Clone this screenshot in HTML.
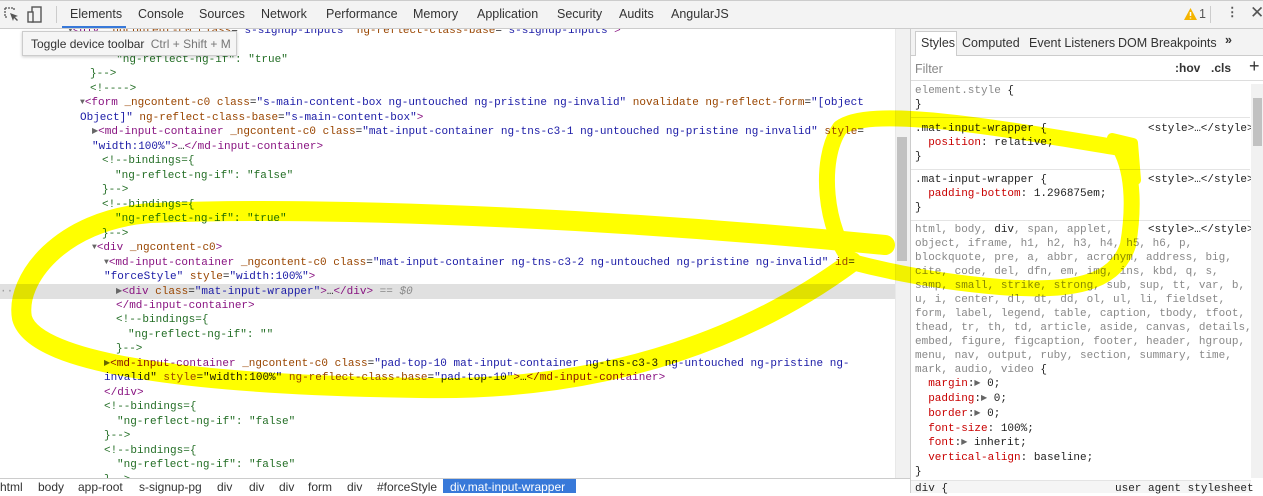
<!DOCTYPE html>
<html><head><meta charset="utf-8"><style>
*{margin:0;padding:0;box-sizing:border-box}
body{width:1263px;height:493px;overflow:hidden;background:#fff;position:relative;font-family:"Liberation Sans",sans-serif}
.top{position:absolute;left:0;top:0;width:1263px;height:29px;background:#f3f3f3;border-bottom:1px solid #ccc;border-top:1px solid #ccc}
.tab{position:absolute;top:7px;font-size:12.5px;color:#333}
.code{position:absolute;font-family:"Liberation Mono",monospace;font-size:11px;line-height:14px;white-space:pre;color:#222}
.t{color:#881280}.a{color:#994500}.v{color:#1a1aa6}.c{color:#236e25}.b{color:#a894a6}.g{color:#888}
.tri{font-size:8px;color:#666;position:relative;top:-1px}
.p{color:#c80000}
.rt{position:absolute;font-family:"Liberation Mono",monospace;font-size:11px;line-height:14px;white-space:pre;color:#222}
.hr{position:absolute;left:911px;width:339px;height:1px;background:#e4e4e4}
.bc{position:absolute;top:480px;font-size:12px;color:#333}
</style></head><body>

<!-- left code -->
<div class="code" style="left:68px;top:24px"><span class="tri">▼</span><span class="t">&lt;div</span> <span class="a">_ngcontent-c0</span> <span class="a">class</span>=<span class="v">"s-signup-inputs"</span> <span class="a">ng-reflect-class-base</span>=<span class="v">"s-signup-inputs"</span><span class="t">&gt;</span></div>
<div class="code c" style="left:90px;top:38px">&lt;!--bindings={</div>
<div class="code c" style="left:103px;top:53px">  "ng-reflect-ng-if": "true"</div>
<div class="code c" style="left:90px;top:67px">}--&gt;</div>
<div class="code c" style="left:90px;top:82px">&lt;!----&gt;</div>
<div class="code" style="left:80px;top:96px"><span class="tri">▼</span><span class="t">&lt;form</span> <span class="a">_ngcontent-c0</span> <span class="a">class</span>=<span class="v">"s-main-content-box ng-untouched ng-pristine ng-invalid"</span> <span class="a">novalidate</span> <span class="a">ng-reflect-form</span>=<span class="v">"[object</span></div>
<div class="code" style="left:80px;top:111px"><span class="v">Object]"</span> <span class="a">ng-reflect-class-base</span>=<span class="v">"s-main-content-box"</span><span class="t">&gt;</span></div>
<div class="code" style="left:92px;top:125px"><span class="tri">▶</span><span class="t">&lt;md-input-container</span> <span class="a">_ngcontent-c0</span> <span class="a">class</span>=<span class="v">"mat-input-container ng-tns-c3-1 ng-untouched ng-pristine ng-invalid"</span> <span class="a">style</span>=</div>
<div class="code" style="left:92px;top:140px"><span class="v">"width:100%"</span><span class="t">&gt;</span>…<span class="t">&lt;/md-input-container&gt;</span></div>
<div class="code c" style="left:102px;top:154px">&lt;!--bindings={</div>
<div class="code c" style="left:115px;top:169px">"ng-reflect-ng-if": "false"</div>
<div class="code c" style="left:102px;top:183px">}--&gt;</div>
<div class="code c" style="left:102px;top:198px">&lt;!--bindings={</div>
<div class="code c" style="left:115px;top:212px">"ng-reflect-ng-if": "true"</div>
<div class="code c" style="left:102px;top:227px">}--&gt;</div>
<div class="code" style="left:92px;top:241px"><span class="tri">▼</span><span class="t">&lt;div</span> <span class="a">_ngcontent-c0</span><span class="t">&gt;</span></div>
<div class="code" style="left:104px;top:256px"><span class="tri">▼</span><span class="t">&lt;md-input-container</span> <span class="a">_ngcontent-c0</span> <span class="a">class</span>=<span class="v">"mat-input-container ng-tns-c3-2 ng-untouched ng-pristine ng-invalid"</span> <span class="a">id</span>=</div>
<div class="code" style="left:104px;top:270px"><span class="v">"forceStyle"</span> <span class="a">style</span>=<span class="v">"width:100%"</span><span class="t">&gt;</span></div>
<div style="position:absolute;left:0;top:284px;width:895px;height:15px;background:#e0e0e0"></div>
<div class="code" style="left:0;top:285px;color:#999">··</div>
<div class="code" style="left:116px;top:285px"><span class="tri">▶</span><span class="t">&lt;div</span> <span class="a">class</span>=<span class="v">"mat-input-wrapper"</span><span class="t">&gt;</span>…<span class="t">&lt;/div&gt;</span> <span class="g">== <i>$0</i></span></div>
<div class="code t" style="left:116px;top:299px">&lt;/md-input-container&gt;</div>
<div class="code c" style="left:116px;top:313px">&lt;!--bindings={</div>
<div class="code c" style="left:128px;top:328px">"ng-reflect-ng-if": ""</div>
<div class="code c" style="left:116px;top:342px">}--&gt;</div>
<div class="code" style="left:104px;top:357px"><span class="tri">▶</span><span class="t">&lt;md-input-container</span> <span class="a">_ngcontent-c0</span> <span class="a">class</span>=<span class="v">"pad-top-10 mat-input-container ng-tns-c3-3 ng-untouched ng-pristine ng-</span></div>
<div class="code" style="left:104px;top:371px"><span class="v">invalid"</span> <span class="a">style</span>=<span class="v">"width:100%"</span> <span class="a">ng-reflect-class-base</span>=<span class="v">"pad-top-10"</span><span class="t">&gt;</span>…<span class="t">&lt;/md-input-container&gt;</span></div>
<div class="code t" style="left:104px;top:386px">&lt;/div&gt;</div>
<div class="code c" style="left:104px;top:400px">&lt;!--bindings={</div>
<div class="code c" style="left:117px;top:415px">"ng-reflect-ng-if": "false"</div>
<div class="code c" style="left:104px;top:429px">}--&gt;</div>
<div class="code c" style="left:104px;top:444px">&lt;!--bindings={</div>
<div class="code c" style="left:117px;top:458px">"ng-reflect-ng-if": "false"</div>
<div class="code c" style="left:104px;top:473px">}--&gt;</div>

<!-- left scrollbar -->
<div style="position:absolute;left:895px;top:29px;width:15px;height:449px;background:#f1f1f1;border-left:1px solid #e8e8e8"></div>
<div style="position:absolute;left:897px;top:137px;width:10px;height:124px;background:#c1c1c1"></div>

<!-- breadcrumb -->
<div style="position:absolute;left:0;top:478px;width:910px;height:15px;background:#fff;border-top:1px solid #ccc"></div>
<div class="bc" style="left:0">html</div><div class="bc" style="left:38px">body</div><div class="bc" style="left:78px">app-root</div><div class="bc" style="left:139px">s-signup-pg</div><div class="bc" style="left:217px">div</div><div class="bc" style="left:249px">div</div><div class="bc" style="left:279px">div</div><div class="bc" style="left:308px">form</div><div class="bc" style="left:347px">div</div><div class="bc" style="left:377px">#forceStyle</div>
<div style="position:absolute;left:443px;top:479px;width:133px;height:14px;background:#3879d9"></div>
<div class="bc" style="left:450px;color:#fff">div.mat-input-wrapper</div>

<!-- right panel -->
<div style="position:absolute;left:910px;top:29px;width:353px;height:464px;background:#fff;border-left:1px solid #ccc"></div>
<div style="position:absolute;left:911px;top:29px;width:352px;height:27px;background:#f3f3f3;border-bottom:1px solid #ccc"></div>
<div style="position:absolute;left:915px;top:31px;width:42px;height:25px;background:#fff;border:1px solid #ccc;border-bottom:none"></div>
<div class="tab" style="left:921px;top:36px">Styles</div>
<div class="tab" style="left:962px;top:36px">Computed</div>
<div class="tab" style="left:1029px;top:36px">Event Listeners</div>
<div class="tab" style="left:1118px;top:36px">DOM Breakpoints</div>
<div class="tab" style="left:1225px;top:33px;font-weight:bold">»</div>
<div style="position:absolute;left:911px;top:56px;width:352px;height:25px;border-bottom:1px solid #ddd"></div>
<div class="tab" style="left:915px;top:62px;color:#888">Filter</div>
<div class="tab" style="left:1175px;top:61px;font-weight:bold;font-size:12px">:hov</div>
<div class="tab" style="left:1211px;top:61px;font-weight:bold;font-size:12px">.cls</div>
<div class="tab" style="left:1249px;top:56px;font-size:18px">+</div>

<div class="rt" style="left:915px;top:84px"><span class="g">element.style</span> {
}</div>
<div class="hr" style="top:117px"></div>
<div class="rt" style="left:915px;top:122px">.mat-input-wrapper {
  <span class="p">position</span>: relative;
}</div>
<div class="rt g" style="left:1148px;top:122px">&lt;style&gt;…&lt;/style&gt;</div>
<div class="hr" style="top:169px"></div>
<div class="rt" style="left:915px;top:173px">.mat-input-wrapper {
  <span class="p">padding-bottom</span>: 1.296875em;
}</div>
<div class="rt g" style="left:1148px;top:173px">&lt;style&gt;…&lt;/style&gt;</div>
<div class="hr" style="top:220px"></div>
<div class="rt" style="left:915px;top:223px"><span class="g">html, body, </span>div<span class="g">, span, applet,
object, iframe, h1, h2, h3, h4, h5, h6, p,
blockquote, pre, a, abbr, acronym, address, big,
cite, code, del, dfn, em, img, ins, kbd, q, s,
samp, small, strike, strong, sub, sup, tt, var, b,
u, i, center, dl, dt, dd, ol, ul, li, fieldset,
form, label, legend, table, caption, tbody, tfoot,
thead, tr, th, td, article, aside, canvas, details,
embed, figure, figcaption, footer, header, hgroup,
menu, nav, output, ruby, section, summary, time,
mark, audio, video</span> {
  <span class="p">margin</span>:<span class="tri">▶</span> 0;
  <span class="p">padding</span>:<span class="tri">▶</span> 0;
  <span class="p">border</span>:<span class="tri">▶</span> 0;
  <span class="p">font-size</span>: 100%;
  <span class="p">font</span>:<span class="tri">▶</span> inherit;
  <span class="p">vertical-align</span>: baseline;
}</div>
<div class="rt g" style="left:1148px;top:223px">&lt;style&gt;…&lt;/style&gt;</div>
<div style="position:absolute;left:911px;top:480px;width:340px;height:13px;background:#f5f5f5;border-top:1px solid #e4e4e4"></div>
<div class="rt" style="left:915px;top:482px">div {</div>
<div class="rt g" style="left:1115px;top:482px">user agent stylesheet</div>
<div style="position:absolute;left:1251px;top:84px;width:12px;height:394px;background:#f1f1f1"></div>
<div style="position:absolute;left:1253px;top:98px;width:9px;height:48px;background:#c1c1c1"></div>

<!-- top toolbar -->
<div class="top"></div>
<svg style="position:absolute;left:4px;top:7px" width="16" height="16" viewBox="0 0 16 16"><path d="M1 1h9v3M1 1v9h3" fill="none" stroke="#555" stroke-width="1.3" stroke-dasharray="2 1"/><path d="M6 6l8 3-3 1 3 3-1 1-3-3-1 3z" fill="#555"/></svg>
<svg style="position:absolute;left:27px;top:6px" width="16" height="17" viewBox="0 0 16 17"><rect x="5" y="1" width="9" height="15" fill="none" stroke="#555" stroke-width="1.4"/><rect x="1" y="6" width="5" height="10" fill="#f3f3f3" stroke="#555" stroke-width="1.4"/></svg>
<div style="position:absolute;left:56px;top:6px;width:1px;height:17px;background:#ccc"></div>
<div class="tab" style="left:70px">Elements</div>
<div style="position:absolute;left:62px;top:26px;width:64px;height:2px;background:#3879d9"></div>
<div class="tab" style="left:138px">Console</div>
<div class="tab" style="left:199px">Sources</div>
<div class="tab" style="left:261px">Network</div>
<div class="tab" style="left:326px">Performance</div>
<div class="tab" style="left:413px">Memory</div>
<div class="tab" style="left:477px">Application</div>
<div class="tab" style="left:557px">Security</div>
<div class="tab" style="left:619px">Audits</div>
<div class="tab" style="left:671px">AngularJS</div>
<svg style="position:absolute;left:1184px;top:8px" width="13" height="12" viewBox="0 0 13 12"><path d="M6.5 0L13 12H0z" fill="#f4b400"/><path d="M6.5 4v4M6.5 9.5v1" stroke="#fff" stroke-width="1.5"/></svg>
<div class="tab" style="left:1199px;color:#555">1</div>
<div style="position:absolute;left:1210px;top:6px;width:1px;height:17px;background:#ccc"></div>
<div class="tab" style="left:1226px;top:4px;font-weight:bold;color:#555">⋮</div>
<div class="tab" style="left:1250px;top:3px;font-size:17px;color:#555">✕</div>

<!-- tooltip -->
<div style="position:absolute;left:22px;top:31px;width:215px;height:25px;background:#f5f5f5;border:1px solid #ccc;box-shadow:0 1px 3px rgba(0,0,0,.2);font-size:12px;color:#333;padding:5px 8px;white-space:nowrap">Toggle device toolbar <span style="color:#777;margin-left:3px">Ctrl + Shift + M</span></div>

<!-- yellow marker -->
<svg style="position:absolute;left:0;top:0;mix-blend-mode:multiply" width="1263" height="493" viewBox="0 0 1263 493">
<g fill="none" stroke="#ffff00" stroke-linecap="round" stroke-linejoin="round">
<path stroke-width="20" d="M885 245 C 650 222 350 205 150 213 C 60 220 15 280 22 318 C 35 365 200 385 420 388 C 620 392 760 330 852 262"/>
<path stroke-width="16" d="M852 262 C 825 230 818 160 840 128 C 870 105 1000 128 1120 148 C 1135 175 1133 215 1128 245 C 1115 285 1070 292 1000 287 C 940 282 890 272 852 262"/>
<path stroke-width="10" d="M1112 138 L1133 143 L1136 180"/>
</g></svg>
</body></html>
